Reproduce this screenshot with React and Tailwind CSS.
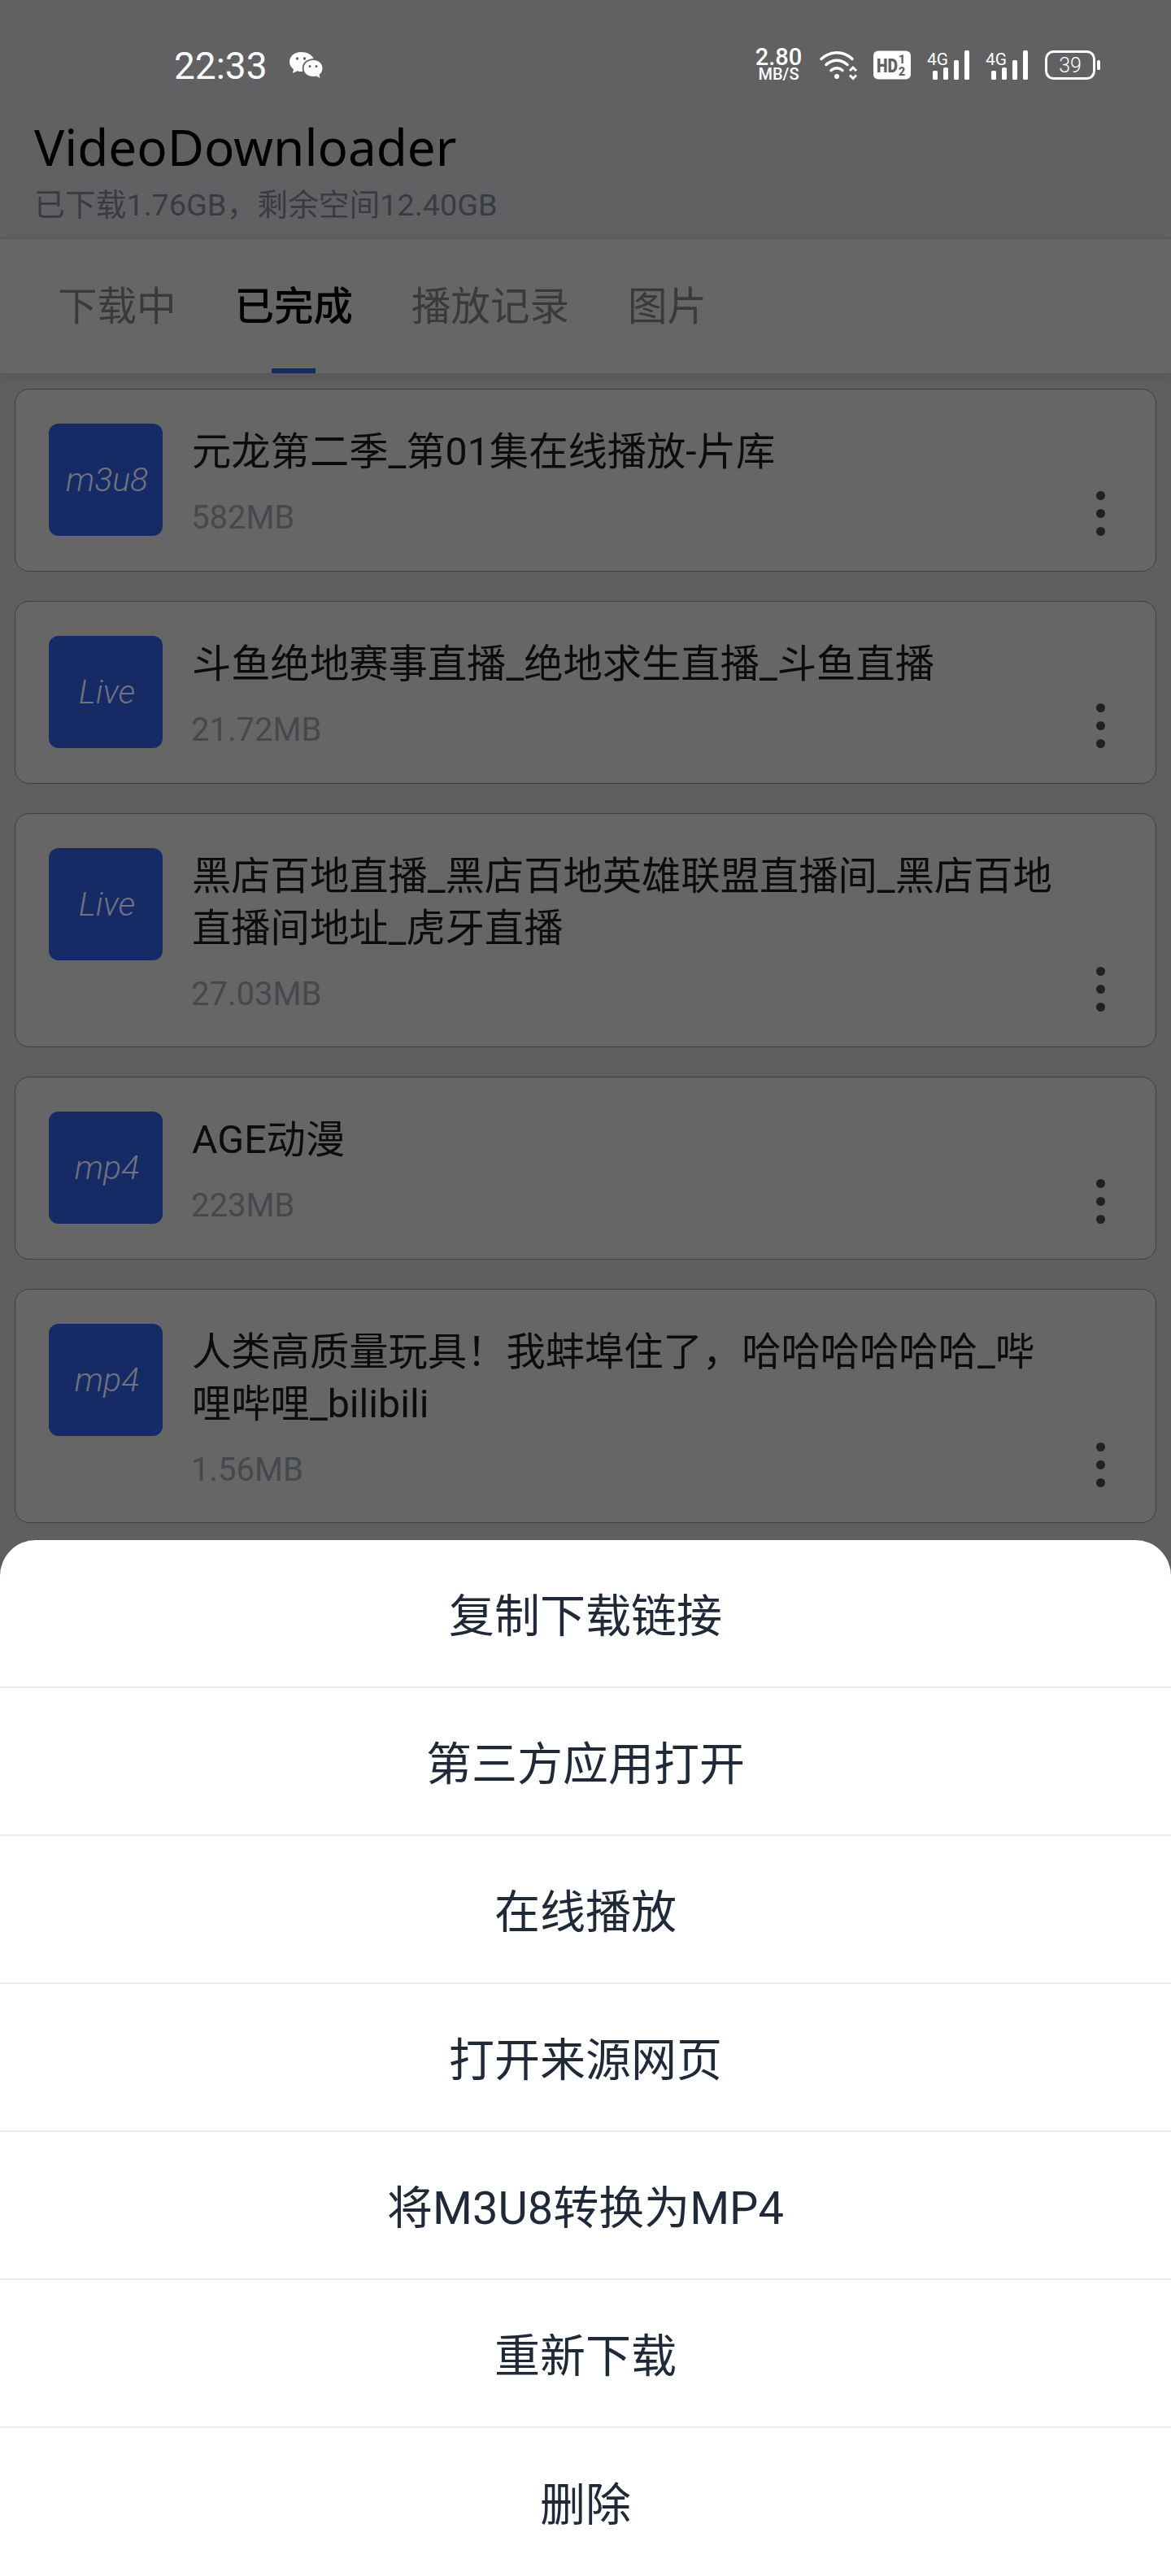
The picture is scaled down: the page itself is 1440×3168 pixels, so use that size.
const FONT = "font-['Roboto','Noto_Sans_CJK_SC',sans-serif]";

const items = [
  { tag: "m3u8", title: "元龙第二季_第01集在线播放-片库", size: "582MB" },
  { tag: "Live", title: "斗鱼绝地赛事直播_绝地求生直播_斗鱼直播", size: "21.72MB" },
  { tag: "Live", title: "黑店百地直播_黑店百地英雄联盟直播间_黑店百地直播间地址_虎牙直播", size: "27.03MB" },
  { tag: "mp4", title: "AGE动漫", size: "223MB" },
  { tag: "mp4", title: "人类高质量玩具！我蚌埠住了，哈哈哈哈哈哈_哔哩哔哩_bilibili", size: "1.56MB" },
];

const actions = ["复制下载链接", "第三方应用打开", "在线播放", "打开来源网页", "将M3U8转换为MP4", "重新下载", "删除"];

function WeChat() {
  return (
    <svg width="42" height="34" viewBox="0 0 42 34" fill="#fff">
      <path d="M15 1C7 1 1 6.500 1 13c0 3.800 2 7 5 9.200L5 27l5.500-2.800c1.500.4 3 .7 4.500.7 1 0 1.500-.1 2.500-.2-.5-1.300-.8-2.700-.8-4 0-6.500 6-11.500 13-11.500h1C29 4.500 22.500 1 15 1z" />
      <circle cx="10.500" cy="9" r="1.700" fill="#616163" />
      <circle cx="19.500" cy="9" r="1.700" fill="#616163" />
      <path d="M30 11c-6.500 0-11.500 4.300-11.500 10S23.500 31 30 31c1.400 0 2.800-.2 4-.6l4.500 2.600-1-4.200c2.500-1.900 4-4.600 4-7.800 0-5.700-5-10-10.500-10z" />
      <circle cx="26" cy="18.500" r="1.500" fill="#616163" />
      <circle cx="34" cy="18.500" r="1.500" fill="#616163" />
    </svg>
  );
}

function Wifi() {
  return (
    <svg width="48" height="36" viewBox="0 0 48 36" fill="none" stroke="#fff" strokeWidth="3.500" strokeLinecap="round">
      <path d="M2 9.500C8 4 14 1.800 21 1.800S34 4 40 9.500" />
      <path d="M8 16.500c4-3.500 8.500-5.300 13-5.300s9 1.800 13 5.300" />
      <path d="M14 23.500c2.200-1.900 4.500-2.800 7-2.800s4.800.9 7 2.800" />
      <circle cx="21" cy="31" r="3" fill="#fff" stroke="none" />
      <path d="M37 24l4-4 4 4" strokeWidth="3" strokeLinecap="butt" />
      <path d="M37 29.500l4 4 4-4" strokeWidth="3" strokeLinecap="butt" />
    </svg>
  );
}

function HD() {
  return (
    <svg width="46" height="36" viewBox="0 0 46 36">
      <rect x="0" y="0.500" width="46" height="35" rx="6" fill="#fff" />
      <text x="4" y="27" fontFamily="Roboto, sans-serif" fontWeight="900" fontSize="24" fill="#616163" textLength="26" lengthAdjust="spacingAndGlyphs">HD</text>
      <text x="31" y="16" fontFamily="Roboto, sans-serif" fontWeight="900" fontSize="14" fill="#616163">1</text>
      <text x="31" y="31" fontFamily="Roboto, sans-serif" fontWeight="900" fontSize="14" fill="#616163">2</text>
    </svg>
  );
}

function Signal() {
  return (
    <svg width="52" height="36" viewBox="0 0 52 36" fill="#fff">
      <text x="0" y="18" fontFamily="Roboto, sans-serif" fontSize="21" fill="#fff" textLength="26" lengthAdjust="spacingAndGlyphs">4G</text>
      <rect x="7" y="25" width="6" height="11" rx="1.500" />
      <rect x="20" y="21" width="6" height="15" rx="1.500" />
      <rect x="33" y="12" width="6" height="24" rx="1.500" />
      <rect x="46" y="0" width="6" height="36" rx="1.500" />
    </svg>
  );
}

function Battery() {
  return (
    <svg width="68" height="36" viewBox="0 0 68 36" fill="none">
      <rect x="1.500" y="1.500" width="59" height="33" rx="9" stroke="#fff" strokeWidth="3" />
      <rect x="64" y="12" width="4" height="12" rx="1.500" fill="#fff" />
      <text x="31" y="27" textAnchor="middle" fontFamily="Roboto, sans-serif" fontWeight="300" fontSize="25" fill="#fff">39</text>
    </svg>
  );
}

function StatusBar() {
  return (
    <div className="flex h-[158px] items-start justify-between pl-[214px] pr-[87px] pt-[60px]">
      <div className="flex items-center gap-[26px]">
        <span className="pt-[2px] text-[46px] leading-[38px] text-white">22:33</span>
        <WeChat />
      </div>
      <div className="flex items-start">
        <div className="-mt-[1px] flex w-[57px] flex-col items-center font-medium text-white">
          <span className="text-[29px] leading-[22px]">2.80</span>
          <span className="mt-[1px] text-[20px] leading-[18px]">MB/S</span>
        </div>
        <div className="ml-[22px] mt-[3px]"><Wifi /></div>
        <div className="ml-[18px] mt-[2px]"><HD /></div>
        <div className="ml-[20px] mt-[2px]"><Signal /></div>
        <div className="ml-[20px] mt-[2px]"><Signal /></div>
        <div className="ml-[21px] mt-[2px]"><Battery /></div>
      </div>
    </div>
  );
}

function Card({ item }) {
  return (
    <div className="flex rounded-[18px] border border-[#3f4042] bg-[#666666] pl-[41px] pr-[38px] pt-[42px] pb-[43px]">
      <div className="flex h-[138px] w-[140px] shrink-0 items-center justify-center rounded-[12px] bg-[#162b66] pl-[3px] pt-[1px]">
        <span className="text-[41px] italic font-light text-[#6f737c]">{item.tag}</span>
      </div>
      <div className="ml-[36px] flex-1 pt-[3px]">
        <div className="text-[48.3px] leading-[64px] text-[#0c0c0c]">{item.title}</div>
        <div className="mt-[28px] -ml-[1px] text-[40px] leading-[42px] text-[#45484d]">{item.size}</div>
      </div>
      <div className="ml-[10px] flex w-[60px] shrink-0 flex-col items-center gap-[11px] self-end">
        <span className="h-[11px] w-[11px] rounded-full bg-[#222222]" />
        <span className="h-[11px] w-[11px] rounded-full bg-[#222222]" />
        <span className="h-[11px] w-[11px] rounded-full bg-[#222222]" />
      </div>
    </div>
  );
}

export default function App() {
  return (
    <div className={`flex h-[3168px] w-[1440px] flex-col overflow-hidden bg-[#5f5f61] ${FONT}`}>
      <header className="h-[292px] shrink-0 bg-[#616163]">
        <StatusBar />
        <div className="pl-[42px]">
          <div className="font-['Noto_Sans',sans-serif] text-[62px] leading-[44px] text-black">VideoDownloader</div>
          <div className="mt-[30px] text-[37.8px] leading-[40px] text-[#383c42]">已下载1.76GB，剩余空间12.40GB</div>
        </div>
      </header>
      <nav className="relative z-10 flex h-[167px] shrink-0 border-t-2 border-[#5a5a5c] bg-[#666666] pl-[35px] pt-[3px] shadow-[0_6px_10px_rgba(0,0,0,0.08)]">
        <div className="flex items-center px-[36px] text-[48.5px] text-[#3a3a3a]">下载中</div>
        <div className="relative flex items-center px-[36px] text-[48.5px] font-medium text-black">
          已完成
          <span className="absolute bottom-0 left-1/2 h-[6px] w-[54px] -translate-x-1/2 bg-[#162b66]" />
        </div>
        <div className="flex items-center px-[36px] text-[48.5px] text-[#3a3a3a]">播放记录</div>
        <div className="flex items-center px-[36px] text-[48.5px] text-[#3a3a3a]">图片</div>
      </nav>
      <main className="flex min-h-0 flex-1 flex-col gap-[36px] overflow-hidden px-[18px] pt-[19px]">
        {items.map((item) => (
          <Card key={item.title} item={item} />
        ))}
      </main>
      <section className="shrink-0 overflow-hidden rounded-t-[44px] bg-white">
        {actions.map((a, i) => (
          <div
            key={a}
            className={`flex h-[182px] items-center justify-center pt-[7px] text-[56px] text-[#1f2937] ${i < actions.length - 1 ? "border-b-2 border-[#ececec]" : ""}`}
          >
            {a}
          </div>
        ))}
      </section>
    </div>
  );
}
